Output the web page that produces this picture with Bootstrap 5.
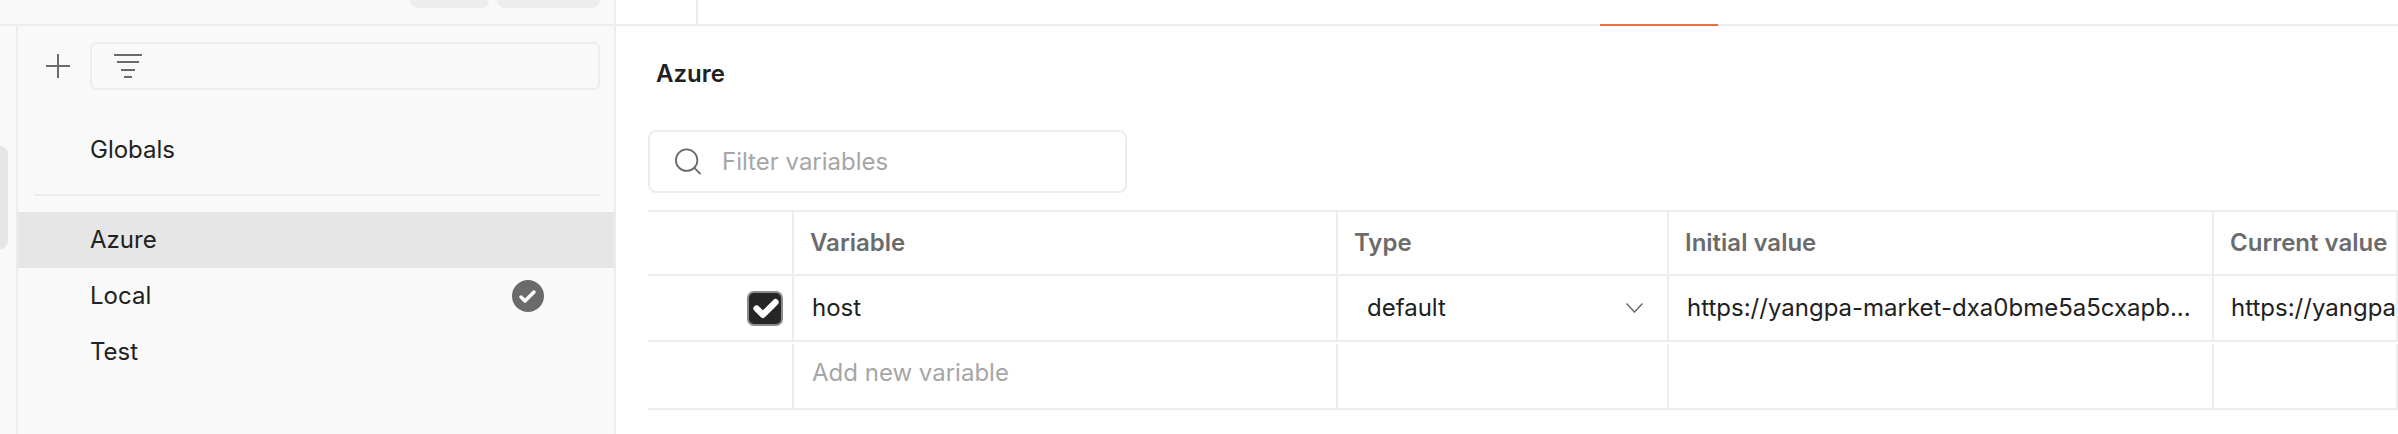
<!DOCTYPE html>
<html lang="en">
<head>
  <meta charset="UTF-8">
  <title>Environments</title>
  <link rel="stylesheet" href="https://cdn.jsdelivr.net/npm/bootstrap@5.3.0/dist/css/bootstrap.min.css">
  <style>
    html, body { height: 434px; overflow: hidden; }
    body { font-family: Inter, "Liberation Sans", sans-serif; font-size: 24px; line-height: 32px; color: #212121; background: #fff; }
    .app-shell { height: 434px; width: 2398px; }

    /* left side */
    .side-pane { width: 616px; flex: none; background: #f9f9f9; border-right: 2px solid #ededed; }
    .side-top { height: 26px; border-bottom: 2px solid #ededed; padding-right: 14px; gap: 8px; }
    .top-btn { height: 8px; background: #ededed; border-radius: 0 0 10px 10px; }
    .top-btn-a { width: 79px; }
    .top-btn-b { width: 103px; }
    .side-rail { width: 18px; flex: none; border-right: 2px solid #ededed; padding-top: 120px; }
    .rail-tab { width: 8px; height: 103px; background: #e6e6e6; border-radius: 0 8px 8px 0; }
    .env-tools { padding: 16px 14px 0 28px; gap: 20px; }
    .env-filter { flex: 1; height: 48px; border: 2px solid #ededed; border-radius: 6px; padding-left: 22px; }
    .env-row { height: 56px; padding: 0 70px 0 72px; background: transparent; border: 0; font-size: 24px; color: #212121; border-radius: 0; }
    .env-row.active { background: #e6e6e6; color: #212121; }
    .env-globals { margin-top: 32px; }
    .env-divider { height: 2px; background: #ededed; margin: 16px 14px 16px 16px; }

    /* main */
    .main-pane { min-width: 0; flex: 1; overflow: hidden; }
    .tab-strip { height: 26px; border-bottom: 2px solid #ededed; }
    .tab-first { width: 82px; height: 24px; border-right: 2px solid #ededed; }
    .tab-gap { width: 125px; height: 24px; }
    .tab-slot { width: 152px; height: 24px; flex: none; background: linear-gradient(#ededed, #ededed) left top / 2px 1px no-repeat; }
    .tab-mark { width: 118px; height: 2px; margin: 24px 0 0 17px; background: #f26b3a; }
    .env-title { font-weight: 600; padding: 32px 0 0 40px; height: 104px; }
    .var-search { width: 479px; height: 63px; margin-left: 32px; border: 2px solid #ededed; border-radius: 8px; padding-left: 25px; gap: 21px; }
    .var-search input { border: 0; padding: 0; font-size: 24px; line-height: 32px; background: transparent; box-shadow: none; color: #212121; }
    .var-search input::placeholder { color: #a6a6a6; }
    .var-table { table-layout: fixed; width: 1750px; margin: 17px 0 0 32px; border-collapse: separate; border-spacing: 0; font-size: 24px; }
    .var-table th, .var-table td { padding: 0; border-right: 2px solid #ededed; border-bottom: 2px solid #ededed; white-space: nowrap; overflow: hidden; font-weight: 400; vertical-align: middle; }
    .var-table thead th { height: 66px; border-top: 2px solid #ededed; font-weight: 600; color: #6b6b6b; }
    .var-table .row-host td { height: 66px; }
    .var-table .row-new td { height: 68px; border-right: 0; vertical-align: top; }
    .cell-new { height: 64px; margin-top: 2px; border-right: 2px solid #ededed; line-height: 58px; color: #a6a6a6; padding-left: 18px; }
    .var-table thead .head-pad { padding-left: 16px; }
    .var-table td.cell-pad { padding-left: 18px; }
    .var-table td.cell-url { padding: 0 20px 0 18px; text-overflow: ellipsis; }
    .var-table td.cell-url-open { padding-left: 17px; }
    .var-table td.cell-type { padding: 0 24px 0 29px; }
    .var-table td.var-check { padding-right: 9px; }
    .var-check .form-check-input { width: 36px; height: 35px; margin: 0; float: none; display: block; border: 2px solid #8c8c8c; border-radius: 7px; background-color: #262626; background-size: 42px; }
  </style>
</head>
<body>
  <div class="app-shell d-flex">
    <aside class="side-pane d-flex flex-column">
      <div class="side-top d-flex justify-content-end">
        <div class="top-btn top-btn-a"></div>
        <div class="top-btn top-btn-b"></div>
      </div>
      <div class="d-flex flex-grow-1">
        <div class="side-rail"><div class="rail-tab"></div></div>
        <div class="flex-grow-1">
          <div class="env-tools d-flex align-items-center">
            <svg width="24" height="24" viewBox="0 0 24 24" fill="none" stroke="#6b6b6b" stroke-width="2"><path d="M12 0v24M0 12h24"/></svg>
            <div class="env-filter d-flex align-items-center">
              <svg width="28" height="24" viewBox="0 0 28 24" fill="none" stroke="#6b6b6b" stroke-width="2"><path d="M0 1h28M3 8h22M7 16h14M10 23h8"/></svg>
            </div>
          </div>
          <div class="list-group list-group-flush">
            <a class="list-group-item env-row env-globals d-flex align-items-center">Globals</a>
            <div class="env-divider"></div>
            <a class="list-group-item env-row active d-flex align-items-center">Azure</a>
            <a class="list-group-item env-row d-flex align-items-center justify-content-between">Local
              <svg width="32" height="32" viewBox="0 0 32 32"><circle cx="16" cy="16" r="16" fill="#6b6b6b"/><path d="M9 17l4 4 9-9" fill="none" stroke="#fff" stroke-width="3.5" stroke-linecap="round" stroke-linejoin="round"/></svg>
            </a>
            <a class="list-group-item env-row d-flex align-items-center">Test</a>
          </div>
        </div>
      </div>
    </aside>
    <main class="main-pane">
      <div class="tab-strip d-flex">
        <div class="tab-first"></div>
        <div class="tab-gap"></div>
        <div class="tab-slot"></div>
        <div class="tab-slot"></div>
        <div class="tab-slot"></div>
        <div class="tab-slot"></div>
        <div class="tab-slot"></div>
        <div class="tab-slot"><div class="tab-mark"></div></div>
        <div class="tab-slot"></div>
        <div class="tab-slot"></div>
        <div class="tab-slot"></div>
        <div class="tab-slot"></div>
      </div>
      <div class="env-title">Azure</div>
      <div class="var-search d-flex align-items-center">
        <svg width="29" height="29" viewBox="0 0 29 29" fill="none" stroke="#6b6b6b" stroke-width="2"><circle cx="13" cy="13" r="12"/><path d="M21.5 21.5l7 7"/></svg>
        <input type="text" class="form-control" placeholder="Filter variables">
      </div>
      <table class="var-table">
        <colgroup>
          <col style="width:146px"><col style="width:544px"><col style="width:331px"><col style="width:545px"><col style="width:184px">
        </colgroup>
        <thead>
          <tr>
            <th></th>
            <th class="head-pad">Variable</th>
            <th class="head-pad">Type</th>
            <th class="head-pad">Initial value</th>
            <th class="head-pad">Current value</th>
          </tr>
        </thead>
        <tbody>
          <tr class="row-host">
            <td class="var-check"><input class="form-check-input ms-auto" type="checkbox" checked></td>
            <td class="cell-pad">host</td>
            <td class="cell-type"><div class="d-flex align-items-center justify-content-between">default
              <svg width="17" height="10" viewBox="0 0 17 10" fill="none" stroke="#6b6b6b" stroke-width="1.5"><path d="M.5.5l8 8.5 8-8.5"/></svg></div></td>
            <td class="cell-url">https://yangpa-market-dxa0bme5a5cxapb...</td>
            <td class="cell-url-open">https://yangpa-market-dxa0bme5a5cxapb...</td>
          </tr>
          <tr class="row-new">
            <td><div class="cell-new"></div></td>
            <td><div class="cell-new">Add new variable</div></td>
            <td><div class="cell-new"></div></td>
            <td><div class="cell-new"></div></td>
            <td><div class="cell-new"></div></td>
          </tr>
        </tbody>
      </table>
    </main>
  </div>
  <script src="https://cdn.jsdelivr.net/npm/bootstrap@5.3.0/dist/js/bootstrap.bundle.min.js"></script>
</body>
</html>
